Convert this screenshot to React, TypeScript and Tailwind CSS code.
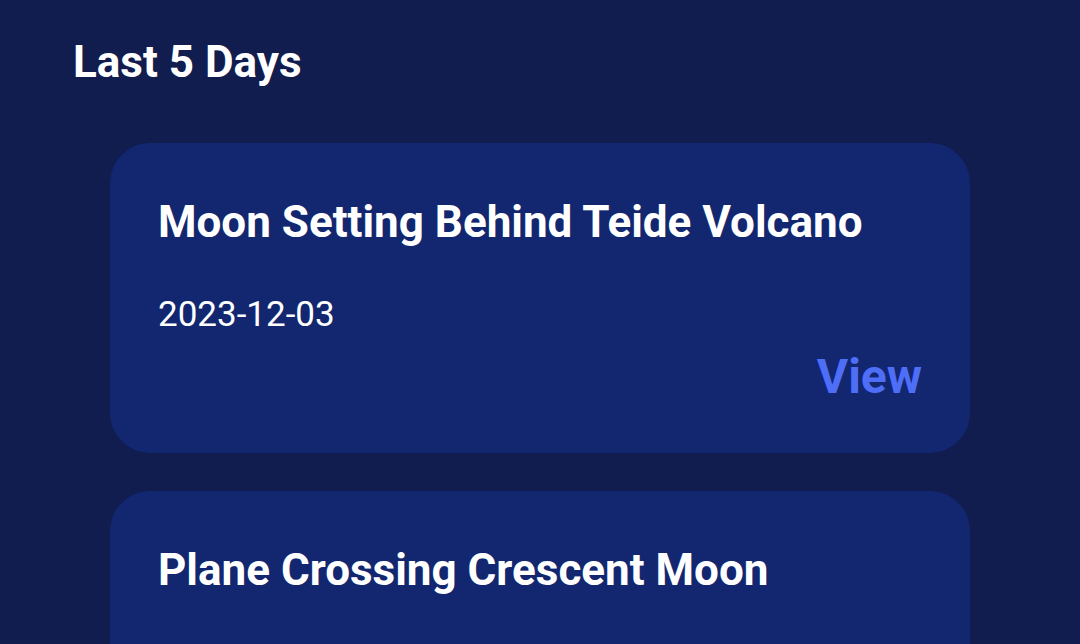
const ITEMS = [
  { title: 'Moon Setting Behind Teide Volcano', date: '2023-12-03' },
  { title: 'Plane Crossing Crescent Moon', date: '2023-12-02' },
]

export default function App() {
  return (
    <div className="h-[644px] overflow-hidden bg-[#111c4f] font-['Roboto',sans-serif] text-white">
      <div className="px-[73px] pt-[36px]">
        <h1 className="text-[44px] font-bold leading-[52px]">Last 5 Days</h1>
      </div>
      <div className="flex flex-col gap-[38px] px-[110px] pt-[55px]">
        {ITEMS.map(item => (
          <div key={item.title} className="rounded-[40px] bg-[#12276f] px-[48px] pt-[53px] pb-[48px]">
            <h2 className="text-[44px] font-bold leading-[52px]">{item.title}</h2>
            <p className="mt-[45px] text-[35px] leading-[44px]">{item.date}</p>
            <div className="mt-[12px] flex justify-end">
              <button type="button" className="text-[48px] font-bold leading-[56px] text-[#4f6ef7]">
                View
              </button>
            </div>
          </div>
        ))}
      </div>
    </div>
  )
}
